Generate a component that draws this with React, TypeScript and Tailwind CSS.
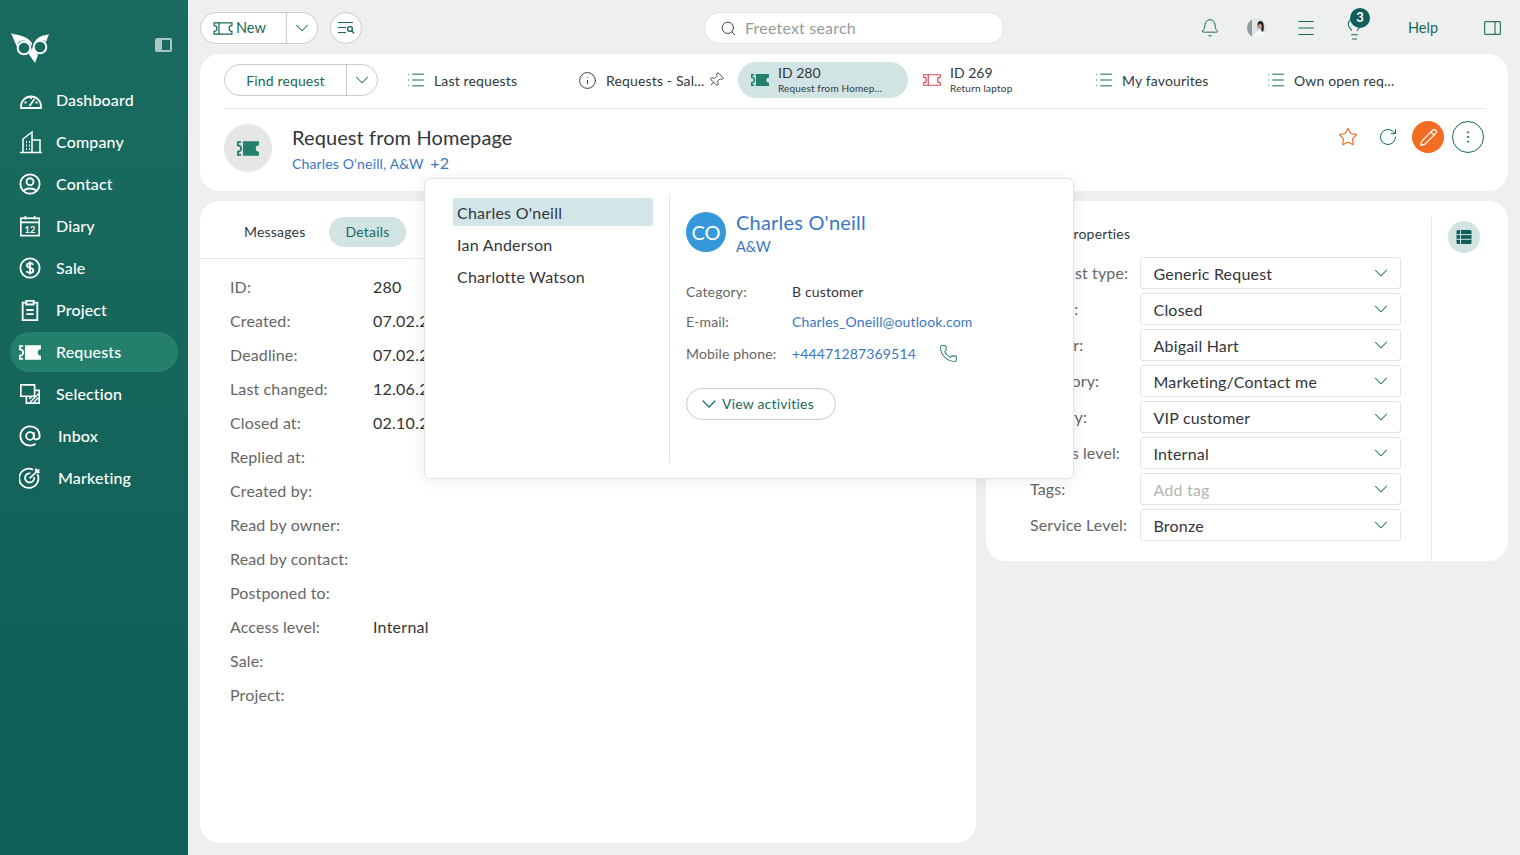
import { Bell, ChevronDown, EllipsisVertical, Info, Lightbulb, List, Menu, Pencil, Phone, Pin, RotateCw, Search, Star } from "lucide-react"
import type { ReactNode } from "react"

const font = { fontFamily: "Lato, 'Noto Sans', sans-serif" }

function Ticket({ className = "", filled = false }: { className?: string; filled?: boolean }) {
  if (filled) {
    return (
      <svg viewBox="0 0 24 16" className={className} fill="none">
        <path d="M6.5 0H24V4.5a3.5 3.5 0 0 0 0 7V16H6.5Z" fill="currentColor" />
        <path d="M4.5 1H1V4.5a3.5 3.5 0 0 1 0 7V15H4.5" stroke="currentColor" strokeWidth="2" />
      </svg>
    )
  }
  return (
    <svg viewBox="0 0 24 16" className={className} fill="none" stroke="currentColor" strokeWidth="1.5">
      <path d="M1 1H23V4.5a3.5 3.5 0 0 0 0 7V15H1V11.5a3.5 3.5 0 0 0 0-7Z" />
      <path d="M7 1V15" />
    </svg>
  )
}

function Owl() {
  return (
    <svg viewBox="0 0 40 32" className="w-10 h-8" fill="none">
      <path d="M1 1C7 4 15 2 22 11L22 14C18 8 11 7 8 11L7 15C5 10 3 6 1 1Z" fill="white" />
      <path d="M39 2C34 4 28 3 24 11L24 14C27 8 33 6 36 10C37 7 38 5 39 2Z" fill="white" />
      <circle cx="14" cy="16" r="6.3" stroke="white" strokeWidth="2" />
      <circle cx="30" cy="15" r="6.3" stroke="white" strokeWidth="2" />
      <path d="M23 15L18 21L25 31L28 23Z" fill="white" />
    </svg>
  )
}

function Dashboard() {
  return (
    <svg viewBox="0 0 24 24" className="w-[24px] h-[24px]" fill="none" stroke="currentColor" strokeWidth="1.8">
      <path d="M2 18.5a10 10 0 0 1 20 0V20H2Z" />
      <path d="M12 8.5V11M5.5 14.5H7.5M16.5 14.5H18.5M10.5 18L15.5 11" />
    </svg>
  )
}

function Company() {
  return (
    <svg viewBox="0 0 24 24" className="w-[24px] h-[24px]" fill="none" stroke="currentColor" strokeWidth="1.5">
      <path d="M1 22.5H23" />
      <path d="M4 22V9L13 2V22" />
      <path d="M13 10H21V22" />
      <path d="M7 12H7.9M10 12H10.9M7 15.5H7.9M10 15.5H10.9M7 19H7.9M10 19H10.9" strokeWidth="1.8" />
    </svg>
  )
}

function Contact() {
  return (
    <svg viewBox="0 0 24 24" className="w-[22px] h-[22px]" fill="none" stroke="currentColor" strokeWidth="2">
      <circle cx="12" cy="12" r="10.5" />
      <circle cx="12" cy="9.5" r="3.8" />
      <path d="M5.5 19.5C7 16 17 16 18.5 19.5" />
    </svg>
  )
}

function Diary() {
  return (
    <svg viewBox="0 0 24 24" className="w-[22px] h-[22px]" fill="none" stroke="currentColor" strokeWidth="1.8">
      <rect x="2" y="3.5" width="20" height="19" />
      <path d="M2 8H22M7 1V5M17 1V5" />
      <text x="12" y="19.5" textAnchor="middle" fontSize="10" fontWeight="700" fill="currentColor" stroke="none" fontFamily="Lato, sans-serif">12</text>
    </svg>
  )
}

function Sale() {
  return (
    <svg viewBox="0 0 24 24" className="w-[22px] h-[22px]" fill="none" stroke="currentColor" strokeWidth="2">
      <circle cx="12" cy="12" r="10.5" />
      <path d="M15.5 8.5C15 7 13.5 6.8 12 6.8C10 6.8 8.7 7.8 8.7 9.3C8.7 12.8 15.6 11 15.6 14.7C15.6 16.2 14 17.2 12 17.2C10.2 17.2 8.8 16.6 8.4 15.2M12 5V19" />
    </svg>
  )
}

function Project() {
  return (
    <svg viewBox="0 0 24 24" className="w-[22px] h-[22px]" fill="none" stroke="currentColor" strokeWidth="2">
      <path d="M8 4H4V23H20V4H16" />
      <path d="M8 2H16V6H8Z" />
      <path d="M8 12H16M8 16.5H16" />
    </svg>
  )
}

function Selection() {
  return (
    <svg viewBox="0 0 24 24" className="w-[22px] h-[22px]" fill="none" stroke="currentColor" strokeWidth="1.8">
      <path d="M2 2H17V14.5H2Z" />
      <path d="M17 8H22V22H8V14.5" />
      <path d="M12 21L21 12M16 21L21 16M11 17L15 14.5" strokeWidth="1.5" />
    </svg>
  )
}

function Inbox() {
  return (
    <svg viewBox="0 0 24 24" className="w-[22px] h-[22px]" fill="none" stroke="currentColor" strokeWidth="2">
      <circle cx="12" cy="12" r="4.2" />
      <path d="M16.2 7.8V13.5C16.2 17 22.5 16.5 22.5 12C22.5 5.5 18 1.5 12 1.5C6 1.5 1.5 6 1.5 12C1.5 18 6 22.5 12 22.5C14.5 22.5 16.5 21.8 18 20.5" />
    </svg>
  )
}

function Marketing() {
  return (
    <svg viewBox="0 0 24 24" className="w-[22px] h-[22px]" fill="none" stroke="currentColor" strokeWidth="2">
      <path d="M20 7.5A10.5 10.5 0 1 1 15.5 3" />
      <path d="M16.5 11A5 5 0 1 1 12.5 7" />
      <path d="M11.5 12.5L22 2.5M18.5 1.5V5.5H22.5" />
    </svg>
  )
}

function FilterSearch() {
  return (
    <svg viewBox="0 0 18 14" className="w-[18px] h-[14px] text-[#17695d]" fill="none" stroke="currentColor" strokeWidth="1.2">
      <path d="M1 1.5H16M1 6.5H9M1 11.5H9" />
      <circle cx="13" cy="8" r="2.4" strokeWidth="1.4" />
      <path d="M14.8 10L17 12.3" strokeWidth="1.5" />
    </svg>
  )
}

function Avatar() {
  return (
    <svg viewBox="0 0 20 20" className="w-5 h-5 rounded-full">
      <rect width="20" height="20" fill="#dfe4e4" />
      <rect width="5" height="20" fill="#8f9a9c" />
      <path d="M7 20C7 15 10 13 13 13C17 13 19 16 19 20Z" fill="#f7f8f8" />
      <path d="M10.5 6C11 2 16 2 16.5 6C17 9 17 12 16 14L14.5 13L14 9L11.5 8.5L11 12Z" fill="#242022" />
      <ellipse cx="13" cy="8.2" rx="1.8" ry="2.5" fill="#c99b82" />
    </svg>
  )
}

function SidePanel() {
  return (
    <svg viewBox="0 0 17 14" className="w-[17px] h-[14px] shrink-0 text-[#2f7269]" fill="none" stroke="currentColor" strokeWidth="1.2">
      <rect x="0.6" y="0.6" width="15.8" height="12.8" rx="1" />
      <path d="M11 0.6V13.4" />
    </svg>
  )
}

function SplitButton({ children, width }: { children: ReactNode; width: string }) {
  return (
    <div className={`flex h-8 items-stretch rounded-full border border-[#ccc] bg-white ${width}`}>
      <div className="flex-1 flex items-center">{children}</div>
      <div className="w-[31px] border-l border-[#ccc] flex items-center justify-center">
        <ChevronDown className="w-[22px] h-[22px] text-[#17695d]" strokeWidth={1.1} />
      </div>
    </div>
  )
}

const nav = [
  { label: "Dashboard", icon: <Dashboard />, x: "w-[37px]" },
  { label: "Company", icon: <Company />, x: "w-[37px]" },
  { label: "Contact", icon: <Contact />, x: "w-[37px]" },
  { label: "Diary", icon: <Diary />, x: "w-[37px]" },
  { label: "Sale", icon: <Sale />, x: "w-[37px]" },
  { label: "Project", icon: <Project />, x: "w-[37px]" },
  { label: "Requests", icon: <Ticket filled className="w-[22px] h-[15px]" />, x: "w-[37px]", active: true },
  { label: "Selection", icon: <Selection />, x: "w-[37px]" },
  { label: "Inbox", icon: <Inbox />, x: "w-[39px]" },
  { label: "Marketing", icon: <Marketing />, x: "w-[39px]" },
]

function Tab({ icon, text, extra }: { icon: ReactNode; text: string; extra?: ReactNode }) {
  return (
    <div className="w-[172px] h-9 pl-[11px] flex items-center gap-[9px] text-[14px] tracking-[0.15px] text-[#2f3a40]">
      {icon}
      <span>{text}</span>
      {extra}
    </div>
  )
}

const listIcon = <List className="w-5 h-5 -ml-[1px] -mr-[1px] text-[#17695d]" strokeWidth={1.2} />

const fields = [
  ["ID:", "280"],
  ["Created:", "07.02.2024"],
  ["Deadline:", "07.02.2024"],
  ["Last changed:", "12.06.2024"],
  ["Closed at:", "02.10.2024"],
  ["Replied at:", ""],
  ["Created by:", ""],
  ["Read by owner:", ""],
  ["Read by contact:", ""],
  ["Postponed to:", ""],
  ["Access level:", "Internal"],
  ["Sale:", ""],
  ["Project:", ""],
]

const props = [
  ["Request type:", "Generic Request"],
  ["Status:", "Closed"],
  ["Owner:", "Abigail Hart"],
  ["Category:", "Marketing/Contact me"],
  ["Priority:", "VIP customer"],
  ["Access level:", "Internal"],
  ["Tags:", "Add tag"],
  ["Service Level:", "Bronze"],
]

export default function App() {
  return (
    <div className="relative w-[1520px] h-[855px] overflow-hidden bg-[#eef0f0] flex" style={font}>
      {/* Sidebar */}
      <aside className="w-[188px] h-full shrink-0 bg-gradient-to-b from-[#1a6b5f] to-[#0f5e57] text-white px-[10px] pt-[32px]">
        <div className="flex items-start justify-between h-[48px]">
          <Owl />
          <div className="w-[17px] h-[14px] mt-[6px] mr-[6px] border-2 border-[#a9c6c1] rounded-[2px] flex">
            <div className="w-[5px] bg-[#a9c6c1]" />
          </div>
        </div>
        <nav className="flex flex-col gap-[2px]">
          {nav.map((item) => (
            <div key={item.label} className={`h-10 flex items-center pl-[9px] rounded-full text-[16px] font-medium tracking-[0.15px] ${item.active ? "bg-[#24806c]" : ""}`}>
              <div className={`${item.x} flex items-center shrink-0`}>{item.icon}</div>
              <span>{item.label}</span>
            </div>
          ))}
        </nav>
      </aside>

      {/* Main */}
      <div className="flex-1 min-w-0 pl-3 pr-3 flex flex-col">
        <header className="h-[54px] shrink-0 flex items-center pt-[12px] pb-[10px]">
          <SplitButton width="w-[118px]">
            <div className="flex items-center gap-[3px] pl-[12px] text-[14.5px] text-[#17695d]">
              <Ticket className="w-[20px] h-[13px]" />
              New
            </div>
          </SplitButton>
          <div className="ml-3 w-8 h-8 rounded-full border border-[#ccc] bg-white flex items-center justify-center">
            <FilterSearch />
          </div>
          <div className="ml-[342px] w-[300px] h-8 rounded-full border border-[#e2e4e4] bg-white flex items-center pl-[15px] gap-2 text-[16px] tracking-[0.2px] text-[#999]">
            <Search className="w-[17px] h-[17px] text-[#444]" strokeWidth={1.4} />
            Freetext search
          </div>
          <div className="ml-[196px] w-5 flex justify-center">
            <Bell className="w-5 h-5 text-[#17695d]" strokeWidth={1.2} />
          </div>
          <div className="ml-[27px]"><Avatar /></div>
          <div className="ml-[29px] w-5 flex justify-center">
            <Menu className="w-[22px] h-[22px] shrink-0 text-[#17695d]" strokeWidth={1.1} />
          </div>
          <div className="ml-[28px] relative w-5 flex justify-center">
            <Lightbulb className="w-[25px] h-[25px] shrink-0 text-[#17695d]" strokeWidth={1} />
            <span className="absolute -top-[8px] left-[6px] w-5 h-5 rounded-full bg-[#0f5e57] text-white text-[13px] font-bold flex items-center justify-center">3</span>
          </div>
          <span className="ml-[44px] text-[14.5px] text-[#17695d]">Help</span>
          <div className="ml-[46px]"><SidePanel /></div>
        </header>

        {/* Title card */}
        <section className="h-[137px] shrink-0 bg-white rounded-[20px] px-6 pt-[8px]">
          <div className="flex items-start h-[47px] border-b border-[#e6e8e8]">
            <div className="mt-[2px]">
              <SplitButton width="w-[154px]">
                <span className="w-full text-center text-[14px] tracking-[0.15px] text-[#17695d]">Find request</span>
              </SplitButton>
            </div>
            <div className="ml-[18px] flex items-center">
              <Tab icon={listIcon} text="Last requests" />
              <Tab
                icon={<Info className="w-[19px] h-[19px] -ml-[1px] text-[#333]" strokeWidth={1.2} />}
                text="Requests - Sal..."
                extra={<Pin className="w-4 h-4 -ml-[5px] rotate-45 text-[#333]" strokeWidth={1.3} />}
              />
              <div className="-ml-[2px] mr-1 w-[170px] h-9 rounded-full bg-[#d2e3e3] pl-[13px] flex items-center gap-[9px]">
                <Ticket filled className="w-[18px] h-[12px] text-[#24806c]" />
                <div className="leading-none text-[#2f3a40]">
                  <div className="text-[14px] leading-[14px]">ID 280</div>
                  <div className="mt-[2px] text-[10px] leading-[13px] tracking-[0.15px]">Request from Homep...</div>
                </div>
              </div>
              <div className="w-[172px] h-9 pl-[11px] flex items-center gap-[9px] text-[#2f3a40]">
                <Ticket className="w-[18px] h-[12px] text-[#e0454f]" />
                <div>
                  <div className="text-[14px] leading-[14px]">ID 269</div>
                  <div className="mt-[2px] text-[10px] leading-[13px] tracking-[0.2px]">Return laptop</div>
                </div>
              </div>
              <Tab icon={listIcon} text="My favourites" />
              <Tab icon={listIcon} text="Own open req..." />
            </div>
          </div>
          <div className="flex items-start pt-[15px]">
            <div className="w-12 h-12 rounded-full bg-[#e6e6e6] flex items-center justify-center">
              <Ticket filled className="w-[22px] h-[15px] text-[#24806c]" />
            </div>
            <div className="ml-5 flex-1">
              <div className="text-[20px] leading-[26px] tracking-[0.1px] text-[#33363a]">Request from Homepage</div>
              <div className="text-[14px] leading-[26px] tracking-[0.15px] text-[#3a78c4]">
                Charles O'neill, A&amp;W <span className="ml-[3px] text-[16px] tracking-[0.4px]">+2</span>
              </div>
            </div>
            <div className="flex items-center -mt-[3px]">
              <Star className="w-5 h-5 text-[#f26c21]" strokeWidth={1.4} />
              <RotateCw className="ml-[20px] w-5 h-5 text-[#17695d]" strokeWidth={1.2} />
              <div className="ml-[14px] w-8 h-8 rounded-full bg-[#f26c21] flex items-center justify-center">
                <Pencil className="w-[19px] h-[19px] text-white" strokeWidth={1.5} />
              </div>
              <div className="ml-2 w-8 h-8 rounded-full border border-[#17695d] flex items-center justify-center">
                <EllipsisVertical className="w-4 h-4 text-[#17695d]" strokeWidth={1.4} />
              </div>
            </div>
          </div>
        </section>

        {/* Lower cards */}
        <div className="mt-[10px] flex gap-[10px] items-start">
          <section className="w-[776px] h-[642px] bg-white rounded-[20px]">
            <div className="h-[58px] border-b border-[#e6e8e8] flex items-center pl-[44px] pt-[3px] text-[14px] tracking-[0.2px]">
              <span className="text-[#2f3a40]">Messages</span>
              <span className="ml-6 mt-[1px] h-[30px] w-[77px] pr-[1px] rounded-full bg-[#d2e3e3] text-[#17695d] flex items-center justify-center">Details</span>
            </div>
            <div className="pl-[30px] pt-[11px]">
              {fields.map(([label, value]) => (
                <div key={label} className="h-[34px] flex items-center text-[16px]">
                  <span className="w-[143px] tracking-[0.13px] text-[#666]">{label}</span>
                  <span className="tracking-[0.25px] text-[#333]">{value}</span>
                </div>
              ))}
            </div>
          </section>

          <section className="w-[522px] h-[360px] bg-white rounded-[20px] flex pt-4 pl-[44px] pr-7">
            <div className="w-[402px] border-r border-[#e6e8e8] pb-4 pr-[30px]">
              <div className="h-[40px] pl-[35px] pt-[7px] text-[14px] leading-[20px] tracking-[0.2px] text-[#2f3a40]">Properties</div>
              <div className="flex flex-col gap-1">
                {props.map(([label, value]) => (
                  <div key={label} className="flex items-center h-8 text-[16px]">
                    <span className="w-[110px] tracking-[0.13px] text-[#666]">{label}</span>
                    <div className="w-[261px] h-8 rounded-[3px] border border-[#e2e4e4] flex items-center justify-between pl-[12.5px] pr-[8px]">
                      <span className={`pt-[1px] tracking-[0.2px] ${value === "Add tag" ? "text-[#b5b5b5]" : "text-[#33363a]"}`}>{value}</span>
                      <ChevronDown className="w-[22px] h-[22px] text-[#17695d]" strokeWidth={1.1} />
                    </div>
                  </div>
                ))}
              </div>
            </div>
            <div className="ml-4 mt-1 w-8 h-8 rounded-full bg-[#d2e3e3] flex items-center justify-center">
              <svg viewBox="0 0 16 16" className="w-4 h-4 text-[#0f5e57]">
                <rect x="0.5" y="1" width="15" height="14" rx="1.5" fill="currentColor" />
                <path d="M0.5 5.6H15.5M0.5 10.3H15.5M4.5 1V15" stroke="#d2e3e3" strokeWidth="1" />
              </svg>
            </div>
          </section>
        </div>
      </div>

      {/* Contact popover */}
      <div className="absolute left-[424px] top-[178px] w-[650px] h-[301px] bg-white border border-[#e2e4e4] rounded-[6px] shadow-[0_2px_16px_rgba(0,0,0,0.08)] flex pt-[15px] pl-[28px]">
        <div className="w-[217px] h-[269px] border-r border-[#e2e4e4] pt-1">
          <div className="w-[200px] text-[16px] tracking-[0.25px] text-[#33363a]">
            <div className="h-7 flex items-center pl-1 pt-[1px] bg-[#d2e6ea] rounded-[2px]">Charles O'neill</div>
            <div className="h-8 mt-[2px] flex items-center pl-1 pt-[1px]">Ian Anderson</div>
            <div className="h-8 flex items-center pl-1 pt-[1px]">Charlotte Watson</div>
          </div>
        </div>
        <div className="pl-4 pt-[18px]">
          <div className="flex items-start">
            <div className="w-10 h-10 rounded-full bg-[#3498db] text-white text-[20px] flex items-center justify-center">CO</div>
            <div className="ml-[10px] -mt-[4px] text-[#3a78c4]">
              <div className="text-[20px] leading-[28px] tracking-[0.2px]">Charles O'neill</div>
              <div className="mt-[2px] text-[14.5px] leading-[18px]">A&amp;W</div>
            </div>
          </div>
          <div className="mt-[19px] text-[14px] tracking-[0.14px]">
            <div className="h-8 flex items-center">
              <span className="w-[106px] text-[#666]">Category:</span>
              <span className="text-[#33363a]">B customer</span>
            </div>
            <div className="h-[28px] flex items-center">
              <span className="w-[106px] text-[#666]">E-mail:</span>
              <span className="text-[#3a78c4]">Charles_Oneill@outlook.com</span>
            </div>
            <div className="h-9 flex items-center">
              <span className="w-[106px] text-[#666]">Mobile phone:</span>
              <span className="text-[#3a78c4]">+44471287369514</span>
              <Phone className="ml-[23px] w-[19px] h-[19px] text-[#24806c]" strokeWidth={1.3} />
            </div>
          </div>
          <div className="mt-[17px] w-[150px] h-8 rounded-full border border-[#ccc] flex items-center pl-[10px] pb-[1px] gap-[1px] text-[14px] tracking-[0.2px] text-[#17695d]">
            <ChevronDown className="w-6 h-6" strokeWidth={1.2} />
            View activities
          </div>
        </div>
      </div>
    </div>
  )
}
